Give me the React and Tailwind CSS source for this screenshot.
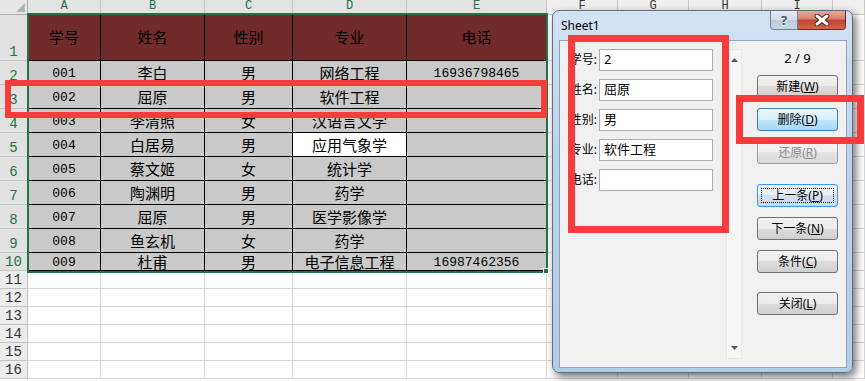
import React from 'react';

const dataCols = [
  'w-[73px]',
  'w-[104px]',
  'w-[88px]',
  'w-[114px]',
  'w-[140px]',
];
const restCols = ['w-[71px]', 'w-[71px]', 'w-[73px]', 'w-[71px]', 'w-[32px]'];

const rows = [
  ['001', '李白', '男', '网络工程', '16936798465'],
  ['002', '屈原', '男', '软件工程', ''],
  ['003', '李清照', '女', '汉语言文学', ''],
  ['004', '白居易', '男', '应用气象学', ''],
  ['005', '蔡文姬', '女', '统计学', ''],
  ['006', '陶渊明', '男', '药学', ''],
  ['007', '屈原', '男', '医学影像学', ''],
  ['008', '鱼玄机', '女', '药学', ''],
  ['009', '杜甫', '男', '电子信息工程', '16987462356'],
];

const mono = "font-['Liberation_Mono','Noto_Sans_CJK_SC',monospace]";
const cjk = "font-['Noto_Sans_CJK_SC',sans-serif]";

function RowHead({ n, sel }) {
  return (
    <div
      className={`w-[28px] shrink-0 flex items-end justify-center border-r border-b border-[#c3c3c3] text-[14px] leading-[16px] ${mono} ${
        sel ? 'bg-[#e1e1e1] text-[#217346]' : 'bg-[#ececec] text-[#333]'
      }`}
    >
      {n}
    </div>
  );
}

function EmptyCells() {
  return restCols.map((w, i) => (
    <div key={i} className={`${w} shrink-0 border-r border-b border-[#d4d4d4] bg-white`} />
  ));
}

function DataRow({ n, cells, h }) {
  return (
    <div className={`flex ${h}`}>
      <RowHead n={n} sel />
      {cells.map((c, i) => {
        const num = /^\d+$/.test(c);
        const white = c === '应用气象学';
        return (
          <div
            key={i}
            className={`${dataCols[i]} shrink-0 flex items-center justify-center pt-[2px] border-r border-b border-black text-black ${
              white ? 'bg-white' : 'bg-[#c9c9c9]'
            } ${num ? `${mono} text-[13px]` : `${cjk} text-[15px]`}`}
          >
            {c}
          </div>
        );
      })}
      <EmptyCells />
    </div>
  );
}

function Btn({ label, acc, tail = ')', kind }) {
  const base =
    'relative h-[23px] w-full rounded-[3px] border flex items-center justify-center text-[12px]';
  let look =
    'border-[#707070] bg-[linear-gradient(#f2f2f2_0%,#ebebeb_50%,#dddddd_50%,#cfcfcf_100%)] text-black';
  if (kind === 'hover')
    look =
      'border-[#3c7fb1] bg-[linear-gradient(#eaf6fd_0%,#d9f0fc_50%,#bee6fd_50%,#a7d9f5_100%)] text-black';
  if (kind === 'disabled')
    look =
      'border-[#9a9a9a] bg-[linear-gradient(#f4f4f4_0%,#efefef_50%,#e3e3e3_50%,#d9d9d9_100%)] text-[#8a8a8a]';
  if (kind === 'focus')
    look =
      'border-[#3399ff] bg-[linear-gradient(#eef5fb_0%,#e6eef6_50%,#d6e1ec_50%,#cbd8e6_100%)] text-black';
  return (
    <div className={`${base} ${look}`}>
      {kind === 'focus' && (
        <span className="absolute inset-[3px] border border-dotted border-black" />
      )}
      <span>
        {label}(<span className="underline">{acc}</span>
        {tail}
      </span>
    </div>
  );
}

function Field({ label, value }) {
  return (
    <div className="flex h-[22px] items-center">
      <div className="w-[37px] text-right text-[12px] text-black">{label}</div>
      <div className="ml-[2px] w-[114px] h-[22px] border border-[#abadb3] bg-white px-[4px] flex items-center text-[13px] text-black">
        {value}
      </div>
    </div>
  );
}

function Dialog() {
  return (
    <div className="absolute left-[552px] top-[10px] w-[301px] h-[363px] rounded-[7px] border border-[#5d6e82] bg-[linear-gradient(#d3e2f3,#bcd2ea_40%,#b5cce6)] shadow-[3px_4px_8px_rgba(0,0,0,0.55)] font-['Noto_Sans','Noto_Sans_CJK_SC',sans-serif]">
      <div className="flex h-[28px] items-start justify-between">
        <div className="pl-[8px] pt-[7px] text-[12px] leading-[16px] text-black">Sheet1</div>
        <div className="mr-[6px] flex">
          <div className="w-[28px] h-[19px] rounded-bl-[4px] border border-t-0 border-[#6b7f96] bg-[linear-gradient(#e3ebf4,#d0dce9_50%,#bccbdc_50%,#c6d4e3)] flex items-center justify-center text-[13px] font-bold leading-none text-[#4b5563] [text-shadow:0_1px_0_#fff]">
            ?
          </div>
          <div className="w-[48px] h-[19px] rounded-br-[4px] border border-l-0 border-t-0 border-[#6b2a20] bg-[linear-gradient(#e9a897,#d8816d_45%,#c2442f_50%,#d06450)] flex items-center justify-center">
            <svg width="16" height="12" viewBox="0 0 16 12">
              <path d="M3 2 L13 10 M13 2 L3 10" stroke="#4a1f18" strokeWidth="5" strokeLinecap="round" />
              <path d="M3 2 L13 10 M13 2 L3 10" stroke="#fff" strokeWidth="3" strokeLinecap="round" />
            </svg>
          </div>
        </div>
      </div>
      <div className="ml-[6px] mt-[1px] w-[288px] h-[328px] border border-[#8fa4bb] bg-[#f0f0f0] flex">
        <div className="w-[166px] pt-[8px] flex flex-col gap-[8px]">
          <Field label="学号:" value="2" />
          <Field label="姓名:" value="屈原" />
          <Field label="性别:" value="男" />
          <Field label="专业:" value="软件工程" />
          <Field label="电话:" value="" />
        </div>
        <div className="mt-[8px] w-[16px] h-[310px] border border-[#e8e8e8] bg-[#f6f6f6] flex flex-col items-center justify-between py-[8px]">
          <svg width="7" height="4" viewBox="0 0 7 4">
            <polygon points="3.5,0 7,4 0,4" fill="#5a5a5a" />
          </svg>
          <svg width="7" height="4" viewBox="0 0 7 4">
            <polygon points="0,0 7,0 3.5,4" fill="#5a5a5a" />
          </svg>
        </div>
        <div className="ml-[15px] w-[81px] flex flex-col">
          <div className="pt-[9px] h-[26px] text-center text-[13px] leading-[17px] text-black">2 / 9</div>
          <div className="mt-[8px]"><Btn label="新建" acc="W" /></div>
          <div className="mt-[10px]"><Btn label="删除" acc="D" kind="hover" /></div>
          <div className="mt-[10px]"><Btn label="还原" acc="R" kind="disabled" /></div>
          <div className="mt-[20px]"><Btn label="上一条" acc="P" kind="focus" /></div>
          <div className="mt-[10px]"><Btn label="下一条" acc="N" /></div>
          <div className="mt-[10px]"><Btn label="条件" acc="C" /></div>
          <div className="mt-[19px]"><Btn label="关闭" acc="L" /></div>
        </div>
      </div>
    </div>
  );
}

export default function App() {
  const letters = ['A', 'B', 'C', 'D', 'E'];
  const restLetters = ['F', 'G', 'H', 'I', ''];
  return (
    <div className="relative w-[865px] h-[381px] overflow-hidden bg-white">
      {/* column header */}
      <div className={`flex h-[15px] ${mono} text-[12px] leading-[13px]`}>
        <div className="relative w-[28px] shrink-0 border-r border-b border-[#ababab] bg-[#e6e6e6]">
          <svg className="absolute right-[2px] bottom-[2px]" width="9" height="9" viewBox="0 0 9 9">
            <polygon points="9,0 9,9 0,9" fill="#b4b4b4" />
          </svg>
        </div>
        {letters.map((l, i) => (
          <div
            key={l}
            className={`${dataCols[i]} shrink-0 flex justify-center border-r border-[#c6c6c6] bg-[#e3e3e3] text-[#217346]`}
          >
            {l}
          </div>
        ))}
        {restLetters.map((l, i) => (
          <div
            key={i}
            className={`${restCols[i]} shrink-0 flex justify-center border-r border-b border-[#c6c6c6] bg-[#efefef] text-[#333]`}
          >
            {l}
          </div>
        ))}
      </div>

      {/* title row */}
      <div className="flex h-[46px]">
        <RowHead n="1" sel />
        {['学号', '姓名', '性别', '专业', '电话'].map((t, i) => (
          <div
            key={t}
            className={`${dataCols[i]} shrink-0 flex items-center justify-center border-r border-b border-black bg-[#722b2b] text-black text-[15px] ${cjk}`}
          >
            {t}
          </div>
        ))}
        <EmptyCells />
      </div>

      {rows.map((r, i) => (
        <DataRow key={i} n={i + 2} cells={r} h={i === 8 ? 'h-[18px]' : 'h-[24px]'} />
      ))}

      {[11, 12, 13, 14, 15, 16].map((n) => (
        <div key={n} className="flex h-[18px]">
          <RowHead n={n} />
          {dataCols.map((w, i) => (
            <div key={i} className={`${w} shrink-0 border-r border-b border-[#d4d4d4] bg-white`} />
          ))}
          <EmptyCells />
        </div>
      ))}

      {/* selection */}
      <div className="absolute left-[27px] top-[13px] w-[521px] h-[260px] border-2 border-[#217346]" />
      <div className="absolute left-[543px] top-[268px] w-[6px] h-[6px] bg-[#217346] border border-white" />

      <Dialog />

      {/* red annotations */}
      <div className="absolute left-[5px] top-[80px] w-[542px] h-[38px] border-[6px] border-[#f93b3b]" />
      <div className="absolute left-[568px] top-[35px] w-[161px] h-[198px] border-[7px] border-[#f93b3b]" />
      <div className="absolute left-[736px] top-[95px] w-[128px] h-[49px] border-[7px] border-[#f93b3b]" />
    </div>
  );
}
